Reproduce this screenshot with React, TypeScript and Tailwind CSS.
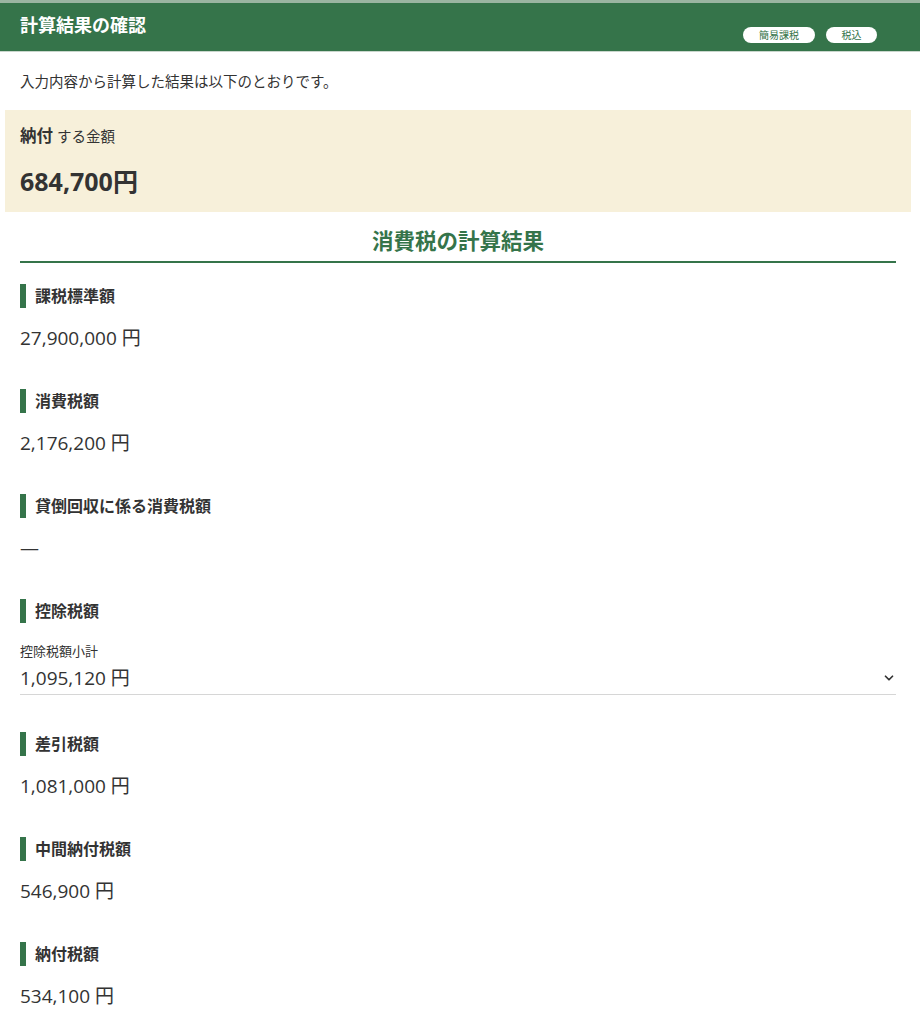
import React from "react";

const font = { fontFamily: '"Open Sans", "Noto Sans CJK JP", "Noto Sans", sans-serif' };

function Label({ text }: { text: string }) {
  return (
    <div className="flex items-center h-[24px]">
      <span className="w-[6px] h-[24px] bg-[#35744a] mr-[9px]" />
      <span className="text-[16px] font-bold text-[#333] leading-[24px]">{text}</span>
    </div>
  );
}

function Item({ label, value }: { label: string; value: string }) {
  return (
    <div className="pt-[21px] pb-[17px]">
      <Label text={label} />
      <div className="mt-[17px] text-[19px] text-[#333] leading-[26px]">{value}</div>
    </div>
  );
}

export default function App() {
  return (
    <div className="w-[920px] bg-white text-[#333]" style={font}>
      <div className="h-[3px] bg-[#9ab5a1]" />
      <div className="h-[49px] bg-[#35744a] flex items-start justify-between px-[20px] border-b border-[#c9d6cc]">
        <div className="text-white font-bold text-[18px] mt-[9px] leading-[26px]">計算結果の確認</div>
        <div className="flex gap-[11px] mt-[24px] mr-[23px]">
          <span className="h-[16px] w-[72px] rounded-full bg-white text-[#35744a] text-[10px] leading-[16px] text-center">簡易課税</span>
          <span className="h-[16px] w-[51px] rounded-full bg-white text-[#35744a] text-[10px] leading-[16px] text-center">税込</span>
        </div>
      </div>
      <div className="px-[20px] pt-[20px] pb-[18px] text-[14.5px] leading-[20px]">入力内容から計算した結果は以下のとおりです。</div>
      <div className="mx-[5px] w-[906px] h-[102px] bg-[#f7f0da] px-[15px] pt-[14px]">
        <div className="leading-[24px]">
          <span className="text-[16.5px] font-bold">納付</span>
          <span className="text-[14.5px] ml-[4px]">する金額</span>
        </div>
        <div className="mt-[16px] text-[25px] font-bold leading-[32px]">684,700円</div>
      </div>
      <div className="ml-[20px] mr-[24px] mt-[14px] pb-[5px] border-b-2 border-[#35744a] text-center text-[#35744a] text-[21.5px] font-bold leading-[30px]">
        消費税の計算結果
      </div>
      <div className="pl-[20px] pr-[24px]">
        <Item label="課税標準額" value="27,900,000 円" />
        <Item label="消費税額" value="2,176,200 円" />
        <Item label="貸倒回収に係る消費税額" value="—" />
        <div className="pt-[21px] pb-[16px]">
          <Label text="控除税額" />
          <div className="mt-[18px] text-[13px] leading-[20px]">控除税額小計</div>
          <div className="flex items-center justify-between border-b border-[#d6d6d6] h-[34px]">
            <span className="text-[19px] leading-[26px]">1,095,120 円</span>
            <svg width="14" height="14" viewBox="0 0 24 24" fill="none" stroke="#333" strokeWidth="3" strokeLinecap="round" strokeLinejoin="round">
              <path d="M6 9l6 6 6-6" />
            </svg>
          </div>
        </div>
        <Item label="差引税額" value="1,081,000 円" />
        <Item label="中間納付税額" value="546,900 円" />
        <Item label="納付税額" value="534,100 円" />
      </div>
    </div>
  );
}
